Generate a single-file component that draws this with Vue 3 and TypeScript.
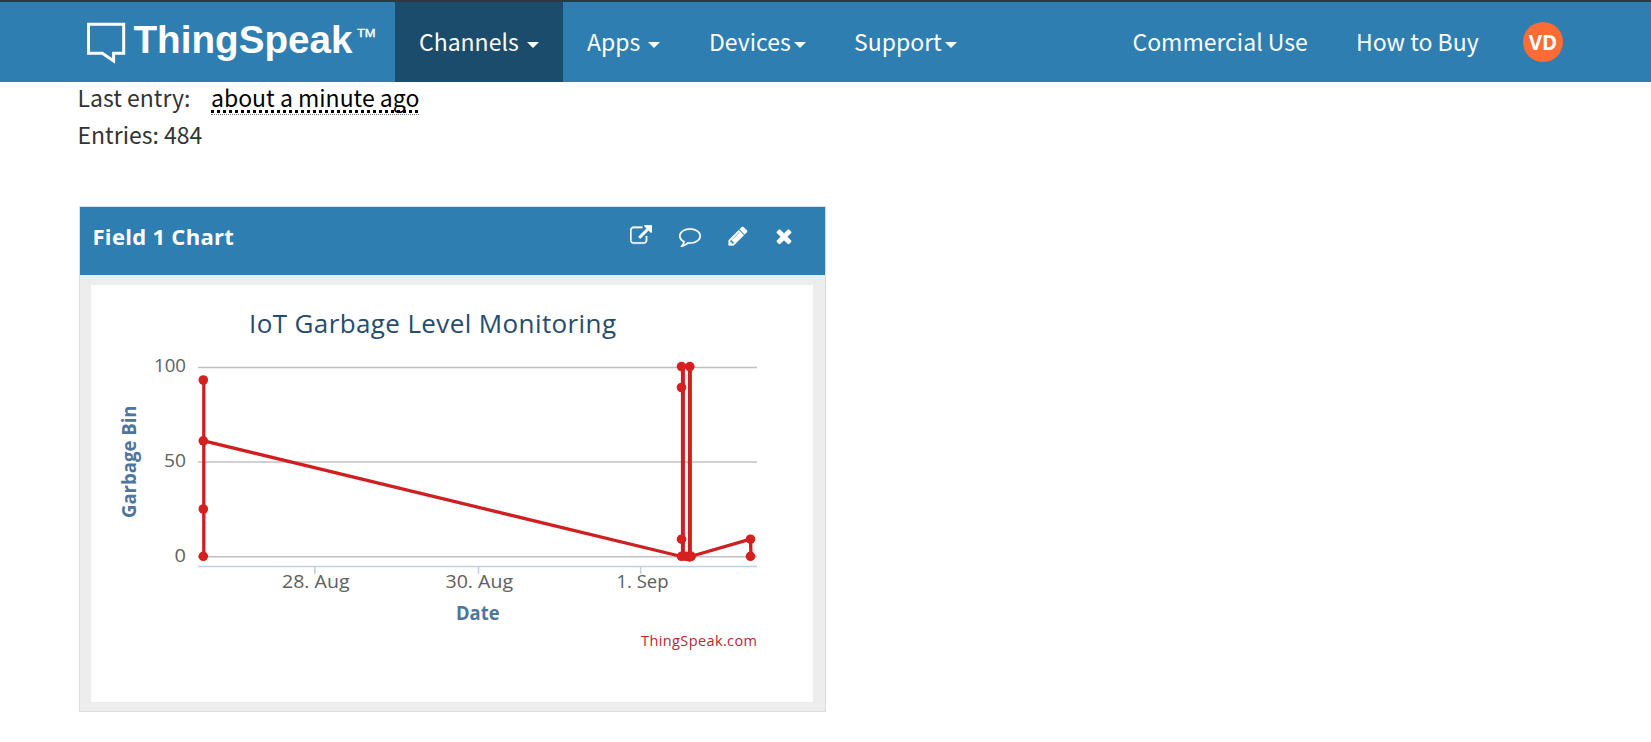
<script setup lang="ts">
interface NavItem {
  label: string
  kind: string
}

interface Marker {
  x: number
  y: number
}

interface AxisLabel {
  text: string
  x: number
  y: number
  width: number
}

const navItems: NavItem[] = [
  { label: 'Channels', kind: 'channels' },
  { label: 'Apps', kind: 'apps' },
  { label: 'Devices', kind: 'devices' },
  { label: 'Support', kind: 'support' },
]

const panelActions: { name: string; path: string }[] = [
  {
    name: 'open',
    path: 'M1408 928v320q0 119-84.5 203.5t-203.5 84.5h-832q-119 0-203.5-84.5t-84.5-203.5v-832q0-119 84.5-203.5t203.5-84.5h704q14 0 23 9t9 23v64q0 14-9 23t-23 9h-704q-66 0-113 47t-47 113v832q0 66 47 113t113 47h832q66 0 113-47t47-113v-320q0-14 9-23t23-9h64q14 0 23 9t9 23zm384-864v512q0 26-19 45t-45 19-45-19l-176-176-652 652q-10 10-23 10t-23-10l-114-114q-10-10-10-23t10-23l652-652-176-176q-19-19-19-45t19-45 45-19h512q26 0 45 19t19 45z',
  },
  {
    name: 'comment',
    path: 'M896 384q-204 0-381.5 69.5t-282 187.5-104.5 255q0 112 71.5 213.5t201.5 175.5l87 50-27 96q-24 91-70 172 152-63 275-171l43-38 57 6q69 8 130 8 204 0 381.5-69.5t282-187.5 104.5-255-104.5-255-282-187.5-381.5-69.5zm896 512q0 174-120 321.5t-326 233-450 85.5q-70 0-145-8-198 175-460 242-49 14-114 22h-5q-15 0-27-10.5t-16-27.5v-1q-3-4-.5-12t2-10 4.5-9.5l6-9 7-8.5 8-9q7-8 31-34.5t34.5-38 31-39.5 32.5-51 27-59 26-76q-157-89-247.5-220t-90.5-281q0-174 120-321.5t326-233 450-85.5 450 85.5 326 233 120 321.5z',
  },
  {
    name: 'edit',
    path: 'M491 1536l91-91-235-235-91 91v107h128v128h107zm523-928q0-22-22-22-10 0-17 7l-542 542q-7 7-7 17 0 22 22 22 10 0 17-7l542-542q7-7 7-17zm-54-192l416 416-832 832h-416v-416zm683 96q0 53-37 90l-166 166-416-416 166-165q36-38 90-38 53 0 91 38l235 234q37 39 37 91z',
  },
  {
    name: 'close',
    path: 'M1490 1322q0 40-28 68l-136 136q-28 28-68 28t-68-28l-294-294-294 294q-28 28-68 28t-68-28l-136-136q-28-28-28-68t28-68l294-294-294-294q-28-28-28-68t28-68l136-136q28-28 68-28t68 28l294 294 294-294q28-28 68-28t68 28l136 136q28 28 28 68t-28 68l-294 294 294 294q28 28 28 68z',
  },
]

const gridLines: number[] = [367.5, 462, 556.7]
const ticks: number[] = [314.8, 478.5, 640.6]

const yLabels: AxisLabel[] = [
  { text: '100', x: 154, y: 371.5, width: 32 },
  { text: '50', x: 164, y: 466.5, width: 22 },
  { text: '0', x: 174.6, y: 561.5, width: 11.4 },
]

const xLabels: AxisLabel[] = [
  { text: '28. Aug', x: 282, y: 588, width: 67.5 },
  { text: '30. Aug', x: 445.5, y: 588, width: 67.5 },
  { text: '1. Sep', x: 616.5, y: 588, width: 52 },
]

const markers: Marker[] = [
  { x: 203.3, y: 380 },
  { x: 203.3, y: 440.8 },
  { x: 203.3, y: 509 },
  { x: 203.3, y: 556.3 },
  { x: 681.5, y: 366.6 },
  { x: 689.8, y: 366.6 },
  { x: 681.5, y: 387.5 },
  { x: 681.5, y: 539.2 },
  { x: 681.5, y: 556.3 },
  { x: 686, y: 556.3 },
  { x: 689.5, y: 556.9 },
  { x: 691.2, y: 556.3 },
  { x: 750.5, y: 539.2 },
  { x: 750.5, y: 556.3 },
]
</script>

<template>
  <div class="page">
    <header class="navbar">
      <svg class="logo" viewBox="87 2 308 80" width="308" height="80">
        <path class="bubble" d="M88.5 24.2H123.7V53.2H113.6V61L102.3 53.2H88.5Z" />
        <text class="logo-name" x="133.5" y="53" textLength="219" lengthAdjust="spacingAndGlyphs">ThingSpeak</text>
        <text class="logo-mark" x="357" y="37" textLength="18.5" lengthAdjust="spacingAndGlyphs">TM</text>
      </svg>
      <nav class="main-nav">
        <a v-for="item in navItems" :key="item.kind" class="nav-item" :class="item.kind">
          <span class="label">{{ item.label }}</span><i class="caret"></i>
        </a>
      </nav>
      <div class="account">
        <a class="commercial">Commercial Use</a>
        <a class="buy">How to Buy</a>
        <span class="avatar">VD</span>
      </div>
    </header>

    <section class="stats">
      <p><span class="stat-label">Last entry:</span><span class="time">about a minute ago</span></p>
      <p class="entries">Entries: 484</p>
    </section>

    <section class="panel">
      <div class="panel-head">
        <h2>Field 1 Chart</h2>
        <div class="actions">
          <svg v-for="action in panelActions" :key="action.name" :class="action.name" viewBox="0 0 1792 1792" width="22" height="22">
            <path :d="action.path" />
          </svg>
        </div>
      </div>
      <div class="panel-body">
        <svg class="chart" viewBox="91 285 722 417" width="722" height="417">
          <text class="title" x="249" y="333" textLength="367" lengthAdjust="spacing">IoT Garbage Level Monitoring</text>
          <line v-for="y in gridLines" :key="y" class="grid" x1="198" x2="757" :y1="y" :y2="y" />
          <line class="axis" x1="198" x2="757" y1="566.4" y2="566.4" />
          <line v-for="x in ticks" :key="x" class="axis" :x1="x" :x2="x" y1="566" y2="574" />
          <path class="series" d="M203.8 380V556.5V440.8L681.5 556.5L690.5 556.5L750.5 539.2L751 556.5" />
          <path class="series burst" d="M682.9 366.6V556.3M689.9 366.6V556.3" />
          <circle v-for="(m, i) in markers" :key="i" class="marker" :cx="m.x" :cy="m.y" r="4.8" />
          <text v-for="l in yLabels" :key="l.text" class="tick-label" :x="l.x" :y="l.y" :textLength="l.width" lengthAdjust="spacingAndGlyphs">{{ l.text }}</text>
          <text v-for="l in xLabels" :key="l.text" class="tick-label" :x="l.x" :y="l.y" :textLength="l.width" lengthAdjust="spacingAndGlyphs">{{ l.text }}</text>
          <text class="axis-title" x="456" y="620.3" textLength="43.5" lengthAdjust="spacingAndGlyphs">Date</text>
          <text class="axis-title" transform="translate(136.3 518) rotate(-90)" textLength="112.5" lengthAdjust="spacingAndGlyphs">Garbage Bin</text>
          <text class="credit" x="641" y="646.3" textLength="116" lengthAdjust="spacing">ThingSpeak.com</text>
        </svg>
      </div>
    </section>
  </div>
</template>

<style>
body {
  margin: 0;
  background: #fff;
}
</style>

<style scoped>
.page {
  width: 1651px;
  height: 742px;
  overflow: hidden;
  background: #fff;
  font-family: "Noto Sans CJK SC", "Noto Sans", sans-serif;
}

.navbar {
  box-sizing: border-box;
  display: flex;
  height: 82px;
  padding-left: 87px;
  border-top: 2px solid #2d3745;
  background: #2e7eb2;
  color: #fff;
  font-size: 23px;
}

.logo {
  flex: none;
}

.bubble {
  fill: none;
  stroke: #fff;
  stroke-width: 3;
}

.logo-name {
  fill: #fff;
  font: bold 39px "Liberation Sans", Arial, sans-serif;
}

.logo-mark {
  fill: #fff;
  stroke: #fff;
  stroke-width: 0.4;
  font: 11.5px "Liberation Sans", Arial, sans-serif;
}

.main-nav {
  display: flex;
}

.nav-item {
  box-sizing: border-box;
  display: flex;
  align-items: center;
  height: 80px;
  padding-left: 24px;
  line-height: 78px;
}

.nav-item .label {
  height: 80px;
  white-space: nowrap;
}

.channels {
  width: 168px;
  background: #1c4c6c;
}

.apps {
  width: 122px;
}

.devices {
  width: 145px;
}

.support {
  width: 150px;
}

.caret {
  flex: none;
  margin: 5px 0 0 3px;
  border: 6px solid transparent;
  border-top-color: #fff;
  border-bottom: 0;
}

.channels .caret,
.apps .caret {
  margin-left: 8px;
}

.account {
  display: flex;
  align-items: center;
  margin-left: auto;
  padding-right: 88px;
  line-height: 78px;
  white-space: nowrap;
}

.commercial {
  width: 223.5px;
  height: 80px;
}

.buy {
  width: 167px;
  height: 80px;
}

.avatar {
  width: 40px;
  height: 40px;
  border-radius: 50%;
  background: #ff6b35;
  font: bold 20.5px/41px "Open Sans", sans-serif;
  text-align: center;
}

.stats {
  height: 124px;
  padding-left: 77.5px;
  color: #333;
  font-size: 23px;
}

.stats p {
  display: flex;
  height: 37px;
  margin: 0;
  line-height: 31px;
}

.stat-label {
  width: 133.5px;
}

.time {
  box-sizing: border-box;
  height: 33px;
  border-bottom: 1px dotted #777;
  color: #000;
  line-height: 31px;
  text-decoration: underline dotted 2.5px;
  text-decoration-skip-ink: none;
  text-underline-offset: 3px;
}

.panel {
  box-sizing: border-box;
  width: 747px;
  height: 506px;
  margin-left: 79px;
  border: 1px solid #dcdcdc;
  border-top-color: #d5e5f0;
  background: #ededed;
}

.panel-head {
  box-sizing: border-box;
  display: flex;
  justify-content: space-between;
  height: 68px;
  padding: 18px 30.5px 0 12.5px;
  background: #2e7eb2;
  color: #fff;
}

.panel-head h2 {
  margin: 0;
  font: bold 22px/23px "Open Sans", sans-serif;
  letter-spacing: 0.3px;
}

.actions {
  display: flex;
}

.actions svg {
  fill: #fff;
  stroke: #fff;
  stroke-width: 20;
}

.comment {
  margin-left: 27.5px;
}

.edit {
  margin-left: 25.5px;
}

.close {
  margin-left: 24px;
}

.panel-body {
  padding: 10px 0 0 11px;
}

.chart {
  display: block;
  background: #fff;
  font-family: "Open Sans", sans-serif;
}

.title {
  fill: #274b6d;
  font-size: 26px;
}

.grid {
  stroke: #c0c0c0;
  stroke-width: 1.5;
}

.axis {
  stroke: #c0d0e0;
  stroke-width: 1.5;
}

.series {
  fill: none;
  stroke: #d01f20;
  stroke-width: 3.3;
  stroke-linejoin: round;
}

.burst {
  stroke-width: 4;
}

.marker {
  fill: #d62020;
}

.tick-label {
  fill: #606060;
  font-size: 18px;
}

.axis-title {
  fill: #4d759e;
  font-size: 19.5px;
  font-weight: bold;
}

.credit {
  fill: #b02a35;
  font-size: 14.5px;
}
</style>
